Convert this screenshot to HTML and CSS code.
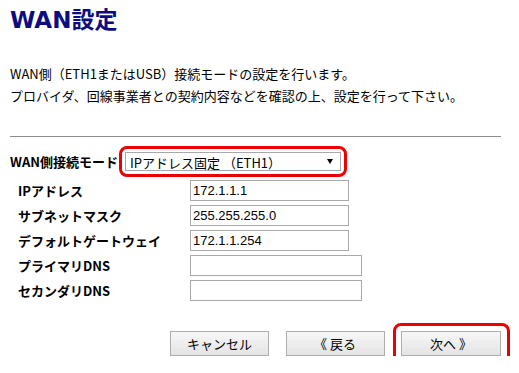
FILE: index.html
```html
<!DOCTYPE html>
<html lang="ja">
<head>
  <meta charset="UTF-8">
  <meta name="viewport" content="width=device-width, initial-scale=1.0">
  <title>WAN設定</title>
  <link rel="stylesheet" href="styles.css">
</head>
<body>

  <div class="page">
    <h1 class="title">WAN設定</h1>

    <p class="lead">
      WAN側（ETH1またはUSB）接続モードの設定を行います。<br>
      プロバイダ、回線事業者との契約内容などを確認の上、設定を行って下さい。
    </p>

    <hr class="rule">

    <div class="mode-row">
      <label class="mode-label" for="wanMode">WAN側接続モード</label>
      <div class="mark select-wrap">
        <select class="mode-select" id="wanMode">
          <option>IPアドレス固定 （ETH1）</option>
          <option>DHCP （ETH1）</option>
          <option>PPPoE （ETH1）</option>
          <option>USB</option>
        </select>
      </div>
    </div>

    <div class="fields">
      <label class="field-label" for="ipAddr">IPアドレス</label>
      <input class="field-input" type="text" id="ipAddr" value="172.1.1.1">

      <label class="field-label" for="subnet">サブネットマスク</label>
      <input class="field-input" type="text" id="subnet" value="255.255.255.0">

      <label class="field-label" for="gateway">デフォルトゲートウェイ</label>
      <input class="field-input" type="text" id="gateway" value="172.1.1.254">

      <label class="field-label" for="dns1">プライマリDNS</label>
      <input class="field-input wide" type="text" id="dns1" value="">

      <label class="field-label" for="dns2">セカンダリDNS</label>
      <input class="field-input wide" type="text" id="dns2" value="">
    </div>

    <div class="actions">
      <button class="btn" type="button">キャンセル</button>
      <button class="btn" type="button">《 戻る</button>
      <div class="mark btn-mark">
        <button class="btn" type="button">次へ 》</button>
      </div>
    </div>
  </div>

</body>
</html>
```

FILE: styles.css
```css
body {
  margin: 0;
  font-family: "Noto Sans CJK JP", sans-serif;
  font-size: 13px;
  color: #000000;
  background: #ffffff;
}

.page {
  width: 491px;
  padding: 7px 10px 0;
}

.title {
  margin: 0;
  font-family: "DejaVu Sans", "Noto Sans CJK JP", sans-serif;
  font-size: 23px;
  font-weight: bold;
  line-height: 26px;
  color: #0c0c80;
}

.lead {
  margin: 30px 0 0;
  line-height: 22px;
}

.rule {
  height: 0;
  margin: 29px 0 0;
  border: 0;
  border-top: 1px solid #8c8c8c;
}

/* red annotation frame drawn round a control */
.mark {
  position: relative;
}

.mark::before {
  content: "";
  position: absolute;
  top: -6px;
  right: -6px;
  bottom: -6px;
  left: -6px;
  border: 3px solid #ee0000;
  border-radius: 8px;
  pointer-events: none;
}

.mode-row {
  display: flex;
  align-items: center;
  margin-top: 15px;
}

.mode-label {
  width: 115px;
  font-weight: bold;
}

.select-wrap::after {
  content: "";
  position: absolute;
  top: 7px;
  right: 8px;
  border-left: 3px solid transparent;
  border-right: 3px solid transparent;
  border-top: 5px solid #000000;
}

.mode-select {
  display: block;
  width: 216px;
  height: 19px;
  padding: 0 4px;
  border: 1px solid #a9a9a9;
  border-radius: 0;
  background: #ffffff;
  font-family: "Noto Sans CJK JP", sans-serif;
  font-size: 13px;
  color: #000000;
  -webkit-appearance: none;
  appearance: none;
  outline: none;
}

.fields {
  display: grid;
  grid-template-columns: 180px auto;
  justify-items: start;
  align-items: center;
  row-gap: 4px;
  margin-top: 9px;
}

.field-label {
  padding-left: 8px;
  font-weight: bold;
}

.field-input {
  box-sizing: border-box;
  width: 159px;
  height: 21px;
  margin: 0;
  padding: 0 2px;
  border: 1px solid #a9a9a9;
  font-family: "Liberation Sans", sans-serif;
  font-size: 13px;
  color: #000000;
}

.field-input.wide {
  width: 172px;
}

.actions {
  display: flex;
  gap: 16.5px;
  margin-top: 30px;
  padding-left: 160px;
}

.btn-mark::before {
  top: -8px;
  right: -9px;
  bottom: -7px;
  left: -8px;
}

.btn {
  display: block;
  width: 100px;
  height: 25px;
  padding: 0;
  border: 1px solid #adadad;
  background: linear-gradient(#f7f7f7, #e4e4e4);
  font-family: "Noto Sans CJK JP", sans-serif;
  font-size: 13px;
  color: #000000;
  cursor: pointer;
}

.btn:hover {
  background: linear-gradient(#eef6fc, #dcecfc);
  border-color: #7eb4ea;
}
```
